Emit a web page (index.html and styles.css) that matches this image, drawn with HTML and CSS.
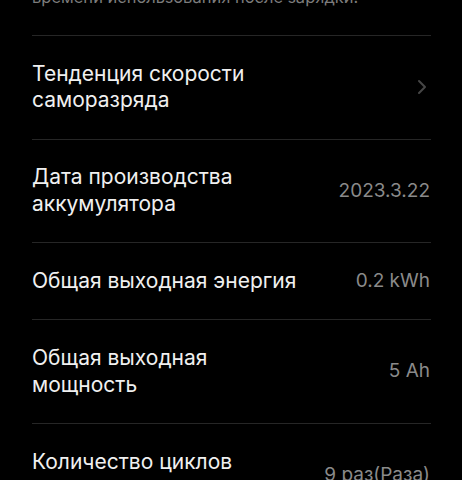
FILE: index.html
```html
<!DOCTYPE html>
<html lang="ru">
<head>
<meta charset="utf-8">
<link rel="stylesheet" href="styles.css">
</head>
<body>
<div class="list">
  <p class="desc">времени использования после зарядки.</p>
  <div class="row">
    <div class="title">Тенденция скорости<br>саморазряда</div>
    <svg class="chev" width="10" height="16" viewBox="0 0 10 16"><path d="M2 2 L8 8 L2 14" fill="none" stroke="#464646" stroke-width="2" stroke-linecap="round" stroke-linejoin="round"/></svg>
  </div>
  <div class="row">
    <div class="title">Дата производства<br>аккумулятора</div>
    <div class="value">2023.3.22</div>
  </div>
  <div class="row">
    <div class="title">Общая выходная энергия</div>
    <div class="value">0.2 kWh</div>
  </div>
  <div class="row">
    <div class="title">Общая выходная<br>мощность</div>
    <div class="value">5 Ah</div>
  </div>
  <div class="row">
    <div class="title">Количество циклов<br>зарядки</div>
    <div class="value">9 раз(Раза)</div>
  </div>
</div>
</body>
</html>
```
FILE: styles.css
```css
html, body {
  margin: 0;
  padding: 0;
  background: #000;
  overflow: hidden;
}
body {
  font-family: "Inter", "Liberation Sans", sans-serif;
  width: 462px;
  height: 480px;
}
.list {
  padding: 0 31px 0 32px;
  margin-top: -14px;
}
.desc {
  margin: 0;
  color: #7c7c7c;
  font-size: 16.5px;
  line-height: 22px;
  padding-bottom: 27px;
  border-bottom: 1px solid #262626;
}
.row {
  display: flex;
  align-items: center;
  justify-content: space-between;
  padding: 24.8px 0 24.8px;
  border-bottom: 1px solid #262626;
}
.title {
  color: #f0f0f0;
  font-size: 21px;
  line-height: 26.5px;
  font-weight: 400;
}
.value {
  color: #8a8a8a;
  font-size: 19px;
  line-height: 26.5px;
  padding-right: 1px;
}
.chev {
  margin-right: 4px;
}
```
